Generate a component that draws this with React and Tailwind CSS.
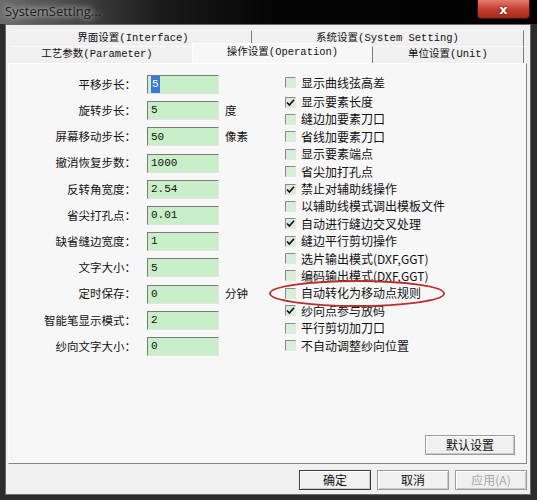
import React from 'react';

// left column: label, value, unit
const FIELDS = [
  ['平移步长：', '5', null],
  ['旋转步长：', '5', '度'],
  ['屏幕移动步长：', '50', '像素'],
  ['撤消恢复步数：', '1000', null],
  ['反转角宽度：', '2.54', null],
  ['省尖打孔点：', '0.01', null],
  ['缺省缝边宽度：', '1', null],
  ['文字大小：', '5', null],
  ['定时保存：', '0', '分钟'],
  ['智能笔显示模式：', '2', null],
  ['纱向文字大小：', '0', null],
];

const OPTIONS = [
  ['显示曲线弦高差', false],
  ['显示要素长度', true],
  ['缝边加要素刀口', false],
  ['省线加要素刀口', false],
  ['显示要素端点', false],
  ['省尖加打孔点', false],
  ['禁止对辅助线操作', true],
  ['以辅助线模式调出模板文件', false],
  ['自动进行缝边交叉处理', true],
  ['缝边平行剪切操作', true],
  ['选片输出模式(DXF,GGT)', false],
  ['编码输出模式(DXF,GGT)', false],
  ['自动转化为移动点规则', false],
  ['纱向点参与放码', true],
  ['平行剪切加刀口', false],
  ['不自动调整纱向位置', false],
];

const CJK = "font-['SimSun','Noto_Sans_CJK_SC',sans-serif]";
const TAB = "font-['Liberation_Mono','Noto_Sans_CJK_SC',monospace] text-[10.5px] text-[#111]";

function Field({ label, value, unit, selected }) {
  return (
    <div className="flex items-center h-[19px]">
      <div className={`w-[127px] text-right text-[11.5px] text-[#111] ${CJK}`}>{label}</div>
      <div className="ml-[11px] w-[72px] h-[19px] bg-[#c9efc9] border-t border-l border-[#7a7a7a] border-b border-r border-b-[#e4e4e4] border-r-[#e4e4e4] flex items-center pl-[3px] font-['Liberation_Mono',monospace] text-[11px] text-[#111]">
        {selected ? <span className="bg-[#3b78d8] text-white px-[1px]">{value}</span> : value}
      </div>
      {unit && <div className={`ml-[6px] text-[11.5px] text-[#111] ${CJK}`}>{unit}</div>}
    </div>
  );
}

function Check({ label, checked }) {
  return (
    <div className="flex items-center h-[17.4px]">
      <div className="w-[11px] h-[11px] bg-[#d7efd7] border-t border-l border-[#8a8a8a] border-b border-r border-b-[#e6e6e6] border-r-[#e6e6e6] flex items-center justify-center">
        {checked && (
          <svg width="9" height="9" viewBox="0 0 9 9">
            <path d="M1 4.5 L3.4 7 L8 1.8" fill="none" stroke="#111" strokeWidth="1.7" />
          </svg>
        )}
      </div>
      <div className={`ml-[5px] text-[12px] text-[#111] whitespace-nowrap ${CJK}`}>{label}</div>
    </div>
  );
}

function Button({ children, strong, disabled, className = '' }) {
  return (
    <div
      className={`h-[20px] flex items-center justify-center bg-[#f0f0f0] border ${strong ? 'border-[#3a3a3a]' : 'border-[#9a9a9a]'} shadow-[inset_1px_1px_0_#fff,inset_-1px_-1px_0_#c8c8c8] text-[12px] ${disabled ? 'text-[#a8a8a8]' : 'text-[#111]'} ${CJK} ${className}`}
    >
      {children}
    </div>
  );
}

export default function App() {
  return (
    <div className="w-[537px] h-[500px] bg-[#2c2c2c] flex flex-col overflow-hidden">
      {/* title bar */}
      <div className="relative h-[24px] shrink-0 flex items-center pl-[5px] bg-[linear-gradient(90deg,#6b6b6b_0%,#4a4a4a_12%,#1a1a1a_30%,#050505_50%,#000_100%)]">
        <span className="font-['Open_Sans','Noto_Sans',sans-serif] text-[13px] text-[#1e1e1e] [text-shadow:0_0_6px_#ddd,0_0_10px_#bbb]">
          SystemSetting...
        </span>
        <div className="absolute right-[7px] top-0 w-[53px] h-[19px] rounded-b-[4px] border border-t-0 border-[#4a1010] bg-[linear-gradient(180deg,#e37b6c_0%,#c5402f_50%,#a52818_100%)] flex items-center justify-center">
          <span className="font-['DejaVu_Sans',sans-serif] font-bold text-[13px] leading-none text-white [text-shadow:0_0_2px_#400]">x</span>
        </div>
      </div>

      {/* dialog body */}
      <div className="ml-[5px] mr-[6px] mb-[5px] flex-1 bg-[#f0f0f0] border border-[#6a6a6a] flex flex-col">
        {/* tab row 1 */}
        <div className="mt-[5px] ml-[9px] h-[16px] flex">
          <div className={`w-[237px] border-t border-t-[#fafafa] border-r border-r-[#7a7a7a] flex items-center justify-center ${TAB}`}>
            界面设置(Interface)
          </div>
          <div className={`w-[272px] border-t border-t-[#fafafa] border-r border-r-[#7a7a7a] flex items-center justify-center ${TAB}`}>
            系统设置(System Setting)
          </div>
        </div>
        {/* tab row 2 */}
        <div className="ml-[4px] h-[17px] flex">
          <div className={`w-[182px] border-t border-t-[#fafafa] flex items-center justify-center pr-[8px] ${TAB}`}>
            工艺参数(Parameter)
          </div>
          <div className={`w-[180px] -mt-[3px] h-[20px] -mb-px bg-[#f7f7f7] border-t border-l border-[#fdfdfd] flex items-center justify-center pb-[2px] z-10 ${TAB}`}>
            操作设置(Operation)
          </div>
          <div className={`w-[152px] border-l border-l-[#7a7a7a] border-r border-r-[#7a7a7a] border-t border-t-[#fafafa] flex items-center justify-center ${TAB}`}>
            单位设置(Unit)
          </div>
        </div>

        {/* panel */}
        <div className="relative ml-[2px] w-[519px] h-[401px] bg-[#f7f7f7] border-t border-l border-[#ffffff] border-r border-b border-r-[#858585] border-b-[#858585] flex flex-col">
          <div className="flex">
            <div className="w-[276px] shrink-0 pt-[11px] flex flex-col gap-y-[7.2px]">
              {FIELDS.map(([label, value, unit], i) => (
                <Field key={i} label={label} value={value} unit={unit} selected={i === 0} />
              ))}
            </div>
            <div className="pt-[10px] flex flex-col">
              {OPTIONS.map(([label, checked], i) => (
                <div key={i} className={i === 0 ? 'mb-[2px]' : ''}>
                  <Check label={label} checked={checked} />
                </div>
              ))}
            </div>
          </div>
          <div className="flex-1" />
          <div className="flex justify-end pr-[11px] mb-[8px]">
            <Button className="w-[90px]">默认设置</Button>
          </div>

          {/* red annotation ellipse */}
          <svg className="absolute left-[259px] top-[215px] pointer-events-none" width="178" height="29" viewBox="0 0 178 29">
            <ellipse cx="89" cy="14.5" rx="87" ry="12.5" fill="none" stroke="#b8302c" strokeWidth="1.8" />
          </svg>
        </div>

        {/* bottom buttons */}
        <div className="mt-[6px] flex justify-end pr-[3px] gap-x-[6px]">
          <Button strong className="w-[72px]">确定</Button>
          <Button className="w-[72px]">取消</Button>
          <Button disabled className="w-[72px]">应用(A)</Button>
        </div>
      </div>
    </div>
  );
}
